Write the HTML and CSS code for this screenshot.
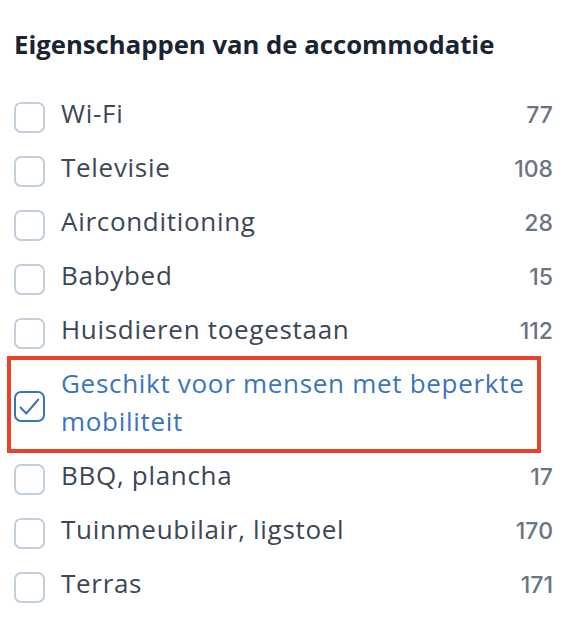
FILE: index.html
```html
<!DOCTYPE html>
<html lang="nl">
<head>
<meta charset="utf-8">
<title>Eigenschappen van de accommodatie</title>
<link rel="stylesheet" href="styles.css">
</head>
<body>
<section class="filter">
  <h2 class="filter-title">Eigenschappen van de accommodatie</h2>
  <ul class="options">
    <li class="option"><span class="box"></span><span class="label">Wi-Fi</span><span class="count">77</span></li>
    <li class="option"><span class="box"></span><span class="label">Televisie</span><span class="count">108</span></li>
    <li class="option"><span class="box"></span><span class="label">Airconditioning</span><span class="count">28</span></li>
    <li class="option"><span class="box"></span><span class="label">Babybed</span><span class="count">15</span></li>
    <li class="option"><span class="box"></span><span class="label">Huisdieren toegestaan</span><span class="count">112</span></li>
    <li class="option is-checked">
      <span class="box"><svg class="tick" viewBox="0 0 31 31" width="31" height="31"><path d="M6.5 16.5 L12.3 22.5 L24.3 8.5" fill="none" stroke="#3a74bf" stroke-width="2" stroke-linecap="round" stroke-linejoin="round"/></svg></span>
      <span class="label">Geschikt voor mensen met beperkte mobiliteit</span>
    </li>
    <li class="option"><span class="box"></span><span class="label">BBQ, plancha</span><span class="count">17</span></li>
    <li class="option"><span class="box"></span><span class="label">Tuinmeubilair, ligstoel</span><span class="count">170</span></li>
    <li class="option"><span class="box"></span><span class="label">Terras</span><span class="count">171</span></li>
  </ul>
</section>
</body>
</html>
```
FILE: styles.css
```css
html, body {
  margin: 0;
  padding: 0;
  background: #ffffff;
}

.filter {
  padding: 0 31px 0 14px;
  font-family: "Open Sans", "Noto Sans", sans-serif;
}

.filter-title {
  margin: 27px 0 23px;
  font-size: 25.7px;
  line-height: 36px;
  font-weight: 700;
  color: #1b2433;
}

.options {
  list-style: none;
  margin: 0;
  padding: 0;
}

.option {
  position: relative;
  display: flex;
  align-items: baseline;
  gap: 16px;
  padding: 8px 0;
}

.box {
  flex: 0 0 auto;
  align-self: center;
  box-sizing: border-box;
  width: 31px;
  height: 31px;
  margin: 4px 0 -4px;
  border: 2px solid #c4cfdc;
  border-radius: 7px;
  position: relative;
}

.tick {
  position: absolute;
  left: -2px;
  top: -2px;
}

.label {
  flex: 1 1 auto;
  font-size: 26px;
  font-weight: 500;
  line-height: 38px;
  letter-spacing: 0.7px;
  color: #3c4756;
}

.count {
  flex: 0 0 auto;
  font-family: "Inter", sans-serif;
  font-size: 23px;
  font-weight: 500;
  color: #6b7582;
}

.is-checked .box {
  border-color: #3a74bf;
}

.is-checked .label {
  color: #3a74bf;
}

.is-checked::after {
  content: "";
  position: absolute;
  left: -7px;
  right: 12px;
  top: 0;
  bottom: -5px;
  border: 4px solid #e8432a;
  pointer-events: none;
}
```
